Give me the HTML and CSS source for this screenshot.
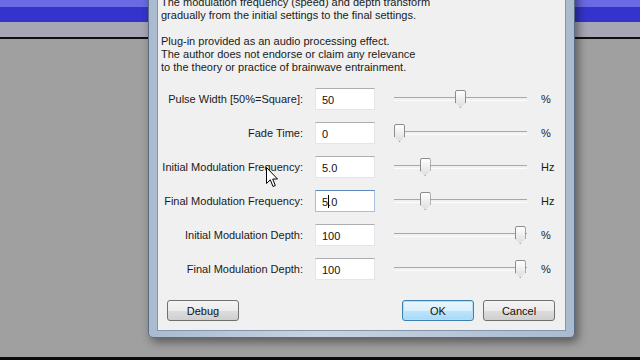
FILE: index.html
```html
<!DOCTYPE html>
<html lang="en">
<head>
    <meta charset="UTF-8">
    <title>Pulse Width Dialog</title>
    <link rel="stylesheet" href="styles.css">
</head>
<body>
    <div class="desktop">
        <div class="band band-light"></div>
        <div class="band band-dark"></div>
        <div class="band band-grey"></div>
        <div class="band band-line"></div>
        <div class="filler"></div>
        <div class="band band-bottom"></div>

        <div class="dialog">
            <div class="client">
                <p class="intro">The modulation frequency (speed) and depth transform<br>gradually from the initial settings to the final settings.</p>
                <p class="intro">Plug-in provided as an audio processing effect.<br>The author does not endorse or claim any relevance<br>to the theory or practice of brainwave entrainment.</p>

                <div class="controls">
                    <label class="label">Pulse Width [50%=Square]:</label>
                    <div class="field">50</div>
                    <div class="slider"><span class="range"><span class="thumb" style="left: 50%"></span></span></div>
                    <span class="unit">%</span>

                    <label class="label">Fade Time:</label>
                    <div class="field">0</div>
                    <div class="slider"><span class="range"><span class="thumb" style="left: 0%"></span></span></div>
                    <span class="unit">%</span>

                    <label class="label">Initial Modulation Frequency:</label>
                    <div class="field">5.0</div>
                    <div class="slider"><span class="range"><span class="thumb" style="left: 21%"></span></span></div>
                    <span class="unit">Hz</span>

                    <label class="label">Final Modulation Frequency:</label>
                    <div class="field focused">5.0<span class="caret"></span></div>
                    <div class="slider"><span class="range"><span class="thumb" style="left: 21%"></span></span></div>
                    <span class="unit">Hz</span>

                    <label class="label">Initial Modulation Depth:</label>
                    <div class="field">100</div>
                    <div class="slider"><span class="range"><span class="thumb" style="left: 99%"></span></span></div>
                    <span class="unit">%</span>

                    <label class="label">Final Modulation Depth:</label>
                    <div class="field">100</div>
                    <div class="slider"><span class="range"><span class="thumb" style="left: 99%"></span></span></div>
                    <span class="unit">%</span>
                </div>

                <div class="buttons">
                    <button class="btn">Debug</button>
                    <span class="spacer"></span>
                    <button class="btn default">OK</button>
                    <button class="btn">Cancel</button>
                </div>
            </div>
        </div>

        <svg class="pointer" width="13" height="21" viewBox="0 0 13 21">
            <path d="M0.5 0.5 V16.5 L4.3 12.8 L7 19.5 L9.3 18.5 L6.7 12 H11.5 Z" fill="#fff" stroke="#000" stroke-width="1"/>
        </svg>
    </div>
</body>
</html>
```

FILE: styles.css
```css
* {
    box-sizing: border-box;
}
body {
    margin: 0;
    background: #a0a0a0;
    font-family: "Liberation Sans", Arial, sans-serif;
    font-size: 11px;
    color: #000;
}
.desktop {
    position: relative;
    width: 640px;
    height: 360px;
    overflow: hidden;
    display: flex;
    flex-direction: column;
}
.band-light {
    height: 7px;
    background: #6a6ae4;
}
.band-dark {
    height: 15px;
    background: #3434cc;
}
.band-grey {
    height: 15px;
    background: #a6a6b4;
}
.band-line {
    height: 2px;
    background: #111;
}
.filler {
    flex: 1;
    background: #a0a0a0;
}
.band-bottom {
    height: 3px;
    background: #0c0c0c;
}

/* dialog window */
.dialog {
    position: absolute;
    left: 148px;
    top: -40px;
    width: 427px;
    height: 378px;
    padding: 0 8px 6px 8px;
    background: linear-gradient(90deg, #aabbd0, #c6d3e2 40%, #aabbd0);
    border: 1px solid #5c6c84;
    border-radius: 0 0 5px 5px;
    box-shadow: 3px 4px 10px rgba(0, 0, 0, 0.45);
}
.client {
    height: 100%;
    background: #f0f0f0;
    border: 1px solid #8494aa;
    padding: 34px 0 0 3px;
    display: flex;
    flex-direction: column;
}
.intro {
    margin: 0 0 13px 0;
    line-height: 13px;
    color: #1a1a1a;
}
.intro + .intro {
    margin-bottom: 8px;
}

/* rows */
.controls {
    display: grid;
    grid-template-columns: 142px 60px 140px auto;
    grid-auto-rows: 34px;
    column-gap: 12px;
    align-items: center;
}
.label {
    justify-self: end;
    white-space: nowrap;
    color: #1a1a1a;
}
.field {
    position: relative;
    height: 22px;
    padding: 4px 6px;
    line-height: 14px;
    background: #fff;
    border: 1px solid #e2e6ea;
    border-top-color: #abadb3;
    color: #111;
}
.field.focused {
    border-color: #a9c0dc;
    border-top-color: #5d8ac0;
}
.caret {
    position: absolute;
    left: 12px;
    top: 4px;
    width: 1px;
    height: 13px;
    background: #000;
}
.slider {
    position: relative;
    height: 18px;
    margin-left: 7px;
}
.slider::before {
    content: "";
    position: absolute;
    left: 0;
    right: 0;
    top: 7px;
    height: 2px;
    border-top: 1px solid #a8a8a8;
    border-bottom: 1px solid #fdfdfd;
}
.range {
    position: absolute;
    left: 0;
    right: 11px;
    top: 0;
    bottom: 0;
}
.thumb {
    position: absolute;
    top: 0;
    width: 11px;
    height: 18px;
    background: linear-gradient(#ffffff, #dedede);
    border: 1px solid #8c8c8c;
    border-radius: 2px 2px 0 0;
    clip-path: polygon(0 0, 100% 0, 100% 70%, 50% 100%, 0 70%);
}
.unit {
    padding-left: 2px;
    color: #1a1a1a;
}

/* buttons */
.buttons {
    display: flex;
    gap: 9px;
    margin-top: 14px;
    padding: 0 10px 0 6px;
}
.spacer {
    flex: 1;
}
.btn {
    width: 72px;
    height: 21px;
    padding: 0;
    font-family: inherit;
    font-size: 11px;
    color: #111;
    background: linear-gradient(#f4f4f4 0%, #ebebeb 50%, #dddddd 51%, #cfcfcf 100%);
    border: 1px solid #707070;
    border-radius: 3px;
}
.btn.default {
    border-color: #3c7fb1;
    box-shadow: inset 0 0 0 1px #b6def5;
    background: linear-gradient(#eaf6fd 0%, #d9f0fc 50%, #bee6fd 51%, #a7d9f5 100%);
}

.pointer {
    position: absolute;
    left: 266px;
    top: 167px;
}
```
